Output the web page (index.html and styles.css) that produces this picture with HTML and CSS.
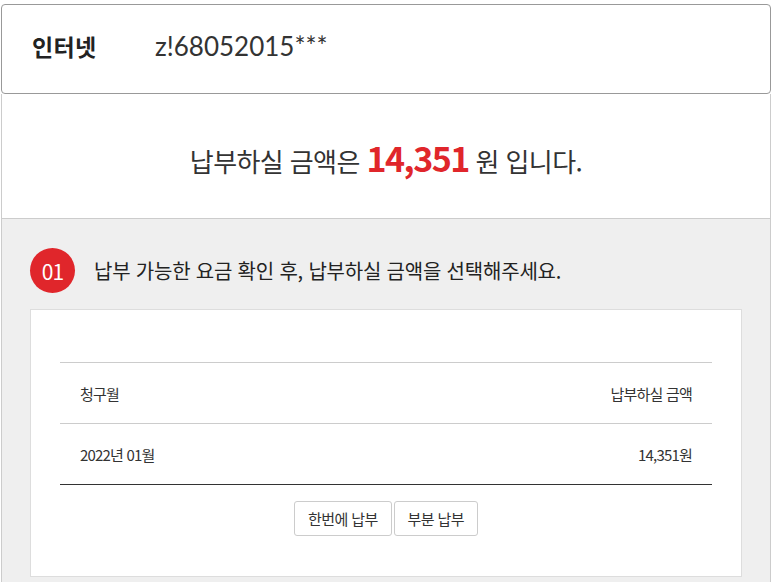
FILE: index.html
```html
<!DOCTYPE html>
<html lang="ko">
<head>
    <meta charset="UTF-8">
    <meta name="viewport" content="width=device-width, initial-scale=1.0">
    <title>요금 납부</title>
    <link rel="stylesheet" href="styles.css">
</head>
<body>
    <div class="wrap">
        <div class="account">
            <span class="account-type">인터넷</span>
            <span class="account-id">z!68052015***</span>
        </div>

        <div class="amount">
            <p>납부하실 금액은 <strong>14,351</strong> 원 입니다.</p>
        </div>

        <div class="step">
            <div class="step-title">
                <span class="step-num">01</span>
                <span class="step-text">납부 가능한 요금 확인 후, 납부하실 금액을 선택해주세요.</span>
            </div>

            <div class="bill-box">
                <table class="bill-table">
                    <thead>
                        <tr>
                            <th class="left">청구월</th>
                            <th class="right">납부하실 금액</th>
                        </tr>
                    </thead>
                    <tbody>
                        <tr>
                            <td class="left">2022년 01월</td>
                            <td class="right">14,351원</td>
                        </tr>
                    </tbody>
                </table>
                <div class="btns">
                    <button type="button">한번에 납부</button><button type="button">부분 납부</button>
                </div>
            </div>
        </div>
    </div>
</body>
</html>
```

FILE: styles.css
```css
body {
    margin: 0;
    background: #fff;
    font-family: "Noto Sans CJK KR", "Noto Sans", sans-serif;
    color: #222;
}
.wrap {
    width: 770px;
    margin: 4px 0 0 1px;
}
.account {
    height: 90px;
    box-sizing: border-box;
    border: 1px solid #999;
    border-radius: 4px;
    display: flex;
    align-items: center;
    padding: 0 0 6px 30px;
}
.account-type {
    width: 123px;
    font-size: 23px;
    font-weight: bold;
    letter-spacing: 0.3px;
    color: #222;
}
.account-id {
    font-family: Lato, "Noto Sans CJK KR", sans-serif;
    font-size: 26px;
    color: #333;
}
.amount {
    height: 125px;
    box-sizing: border-box;
    border: 1px solid #ccc;
    border-top: none;
    display: flex;
    align-items: center;
    justify-content: center;
    padding-top: 3px;
}
.amount p {
    margin: 0;
    font-size: 26px;
    letter-spacing: -0.6px;
    color: #333;
}
.amount strong {
    color: #e0262b;
    font-size: 34px;
    font-weight: bold;
    letter-spacing: -1.5px;
}
.step {
    background: #efefef;
    border: 1px solid #ccc;
    border-top: none;
    border-bottom: none;
    padding: 29px 28px 5px 28px;
}
.step-title {
    display: flex;
    align-items: center;
}
.step-num {
    width: 45px;
    height: 45px;
    border-radius: 50%;
    background: #e0262b;
    color: #fff;
    font-size: 21px;
    letter-spacing: -1px;
    display: flex;
    align-items: center;
    justify-content: center;
}
.step-text {
    margin-left: 19px;
    font-size: 20px;
    letter-spacing: -0.2px;
    color: #222;
}
.bill-box {
    margin-top: 16px;
    background: #fff;
    border: 1px solid #ddd;
    padding: 52px 29px 40px 29px;
}
.bill-table {
    width: 100%;
    border-collapse: collapse;
    border-top: 1px solid #ccc;
    border-bottom: 1px solid #333;
}
.bill-table th,
.bill-table td {
    height: 60px;
    padding: 0 20px;
    font-size: 15px;
    font-weight: normal;
    color: #333;
    letter-spacing: -0.8px;
}
.bill-table thead th {
    border-bottom: 1px solid #ccc;
}
.left {
    text-align: left;
}
.right {
    text-align: right;
}
.btns {
    margin-top: 16px;
    text-align: center;
}
.btns button {
    height: 35px;
    margin: 0 1px;
    padding: 0 13px;
    background: #fff;
    border: 1px solid #ccc;
    border-radius: 3px;
    font-family: "Noto Sans CJK KR", sans-serif;
    font-size: 15px;
    letter-spacing: -0.6px;
    color: #333;
    cursor: pointer;
}
```
